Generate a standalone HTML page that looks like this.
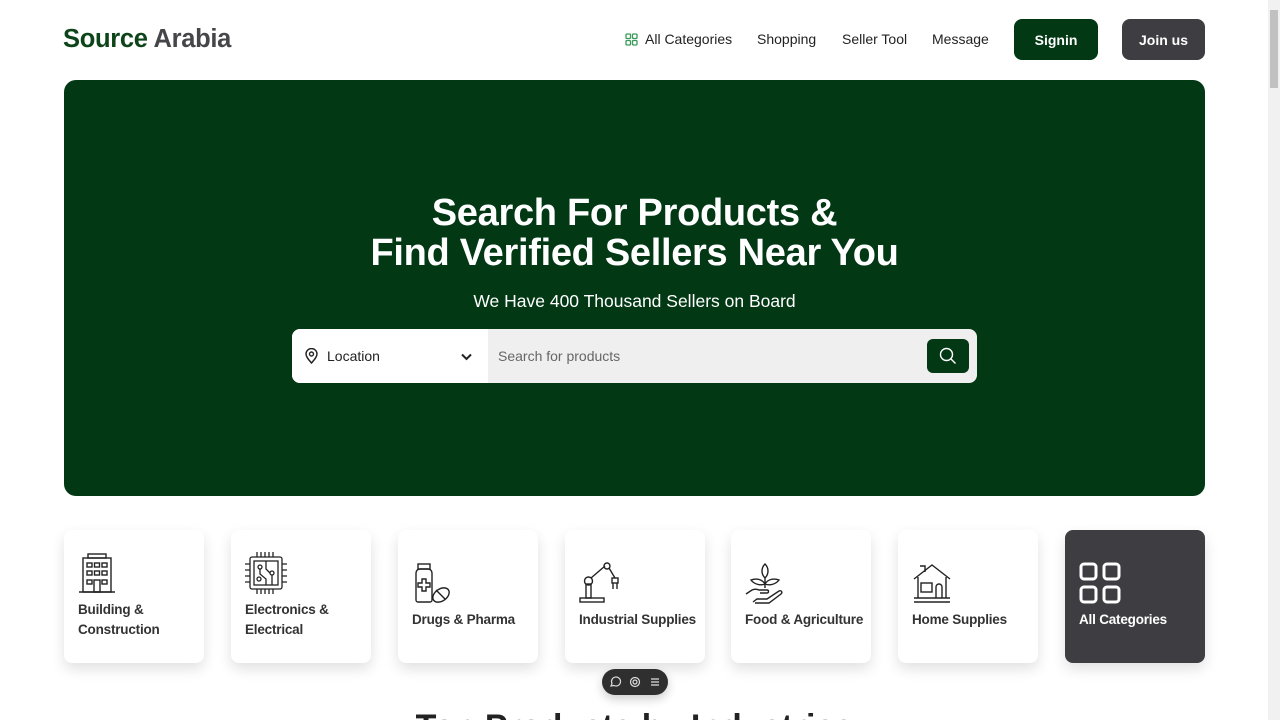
<!DOCTYPE html>
<html style="height:720px;overflow:hidden"><head><meta charset="utf-8"><style>
*{box-sizing:border-box;margin:0;padding:0}
body{width:1280px;height:720px;overflow:hidden;background:#fff;font-family:"Liberation Sans",sans-serif;color:#222;position:relative}
.abs{position:absolute}
.logo{left:63px;top:25px;font-size:25.5px;font-weight:bold;letter-spacing:-0.3px}
.nav{top:31px;font-size:14px;color:#222}
.btn{top:19px;height:41px;border-radius:8px;color:#fff;font-weight:bold;font-size:14px;display:flex;align-items:center;justify-content:center}
.hero{left:64px;top:80px;width:1141px;height:416px;background:#023814;border-radius:12px}
.h1{left:0;width:1269px;text-align:center;color:#fff;font-size:38px;line-height:40px;font-weight:bold;letter-spacing:-0.3px}
.card{top:530px;width:140px;height:133px;background:#fff;border-radius:8px;box-shadow:0 6px 14px rgba(0,0,0,.12)}
.card .t{position:absolute;left:14px;font-size:13.5px;font-weight:bold;color:#333;line-height:20px;white-space:nowrap;letter-spacing:-0.2px}
.card svg{position:absolute;left:14px}
</style></head><body>
<div class="abs logo"><span style="color:#0d4419">Source</span> <span style="color:#46464a">Arabia</span></div>
<svg class="abs" style="left:625px;top:33px" width="13" height="13" viewBox="0 0 13 13" fill="none" stroke="#3a9a5a" stroke-width="1.3"><rect x="1" y="1" width="4.5" height="4.5" rx="1"/><rect x="7.5" y="1" width="4.5" height="4.5" rx="1"/><rect x="1" y="7.5" width="4.5" height="4.5" rx="1"/><rect x="7.5" y="7.5" width="4.5" height="4.5" rx="1"/></svg>
<div class="abs nav" style="left:645px">All Categories</div>
<div class="abs nav" style="left:757px">Shopping</div>
<div class="abs nav" style="left:842px">Seller Tool</div>
<div class="abs nav" style="left:932px">Message</div>
<div class="abs btn" style="left:1014px;width:84px;background:#023814">Signin</div>
<div class="abs btn" style="left:1122px;width:83px;background:#3e3e42">Join us</div>
<div class="abs" style="left:1268px;top:0;width:12px;height:720px;background:#f1f1f1"></div>
<div class="abs" style="left:1270px;top:10px;width:8px;height:78px;background:#c1c1c1"></div>

<div class="abs hero"></div>
<div class="abs h1" style="top:193px">Search For Products &amp;</div>
<div class="abs h1" style="top:233px">Find Verified Sellers Near You</div>
<div class="abs" style="left:0;width:1269px;top:291px;text-align:center;color:#fff;font-size:17.5px">We Have 400 Thousand Sellers on Board</div>
<div class="abs" style="left:292px;top:329px;width:685px;height:54px;background:#efefef;border-radius:8px;overflow:hidden">
 <div class="abs" style="left:0;top:0;width:196px;height:54px;background:#fff"></div>
 <svg class="abs" style="left:13px;top:19px" width="13" height="16" viewBox="0 0 13 16" fill="none" stroke="#222" stroke-width="1.4"><path d="M6.5 15C3 11 1 8.5 1 6a5.5 5.5 0 0 1 11 0c0 2.5-2 5-5.5 9z"/><circle cx="6.5" cy="6" r="2"/></svg>
 <div class="abs" style="left:35px;top:19px;font-size:14px;color:#222">Location</div>
 <svg class="abs" style="left:169px;top:24px" width="11" height="8" viewBox="0 0 11 8" fill="none" stroke="#222" stroke-width="2"><path d="M1 1.5l4.5 4.5 4.5-4.5"/></svg>
 <div class="abs" style="left:206px;top:19px;font-size:14px;color:#666">Search for products</div>
 <div class="abs" style="left:635px;top:10px;width:42px;height:34px;background:#023814;border-radius:6px"></div>
 <svg class="abs" style="left:647px;top:18px" width="18" height="18" viewBox="0 0 18 18" fill="none" stroke="#fff" stroke-width="1.4"><circle cx="7.5" cy="7.5" r="6"/><path d="M12 12l4.5 4.5"/></svg>
</div>

<div class="abs card" style="left:64px">
 <svg style="top:22px" width="38" height="42" viewBox="0 0 38 42" fill="none" stroke="#222" stroke-width="1.4"><rect x="5" y="6" width="28" height="34"/><rect x="10" y="2" width="18" height="4"/><path d="M1 40h36"/><rect x="9" y="11" width="5" height="4"/><rect x="16.5" y="11" width="5" height="4"/><rect x="24" y="11" width="5" height="4"/><rect x="9" y="19" width="5" height="4"/><rect x="16.5" y="19" width="5" height="4"/><rect x="24" y="19" width="5" height="4"/><rect x="9" y="28" width="5" height="4"/><rect x="16" y="28" width="6" height="12"/><rect x="24" y="28" width="5" height="4"/></svg>
 <div class="t" style="top:70px">Building &amp;<br>Construction</div></div>
<div class="abs card" style="left:231px">
 <svg style="top:22px" width="42" height="42" viewBox="0 0 42 42" fill="none" stroke="#222" stroke-width="1.3"><rect x="5" y="5" width="32" height="32" rx="2"/><rect x="9" y="9" width="24" height="24"/><path d="M12 0v5M16 0v5M20 0v5M24 0v5M28 0v5M12 37v5M16 37v5M20 37v5M24 37v5M28 37v5M0 12h5M0 18h5M0 24h5M0 30h5M37 12h5M37 18h5M37 24h5M37 30h5"/><circle cx="15" cy="15" r="2"/><circle cx="27" cy="21" r="2"/><circle cx="14" cy="27" r="2"/><path d="M15 17v5l6 5v6M27 23v10M21 9v8l4 4"/></svg>
 <div class="t" style="top:70px">Electronics &amp;<br>Electrical</div></div>
<div class="abs card" style="left:398px">
 <svg style="top:32px" width="38" height="42" viewBox="0 0 38 42" fill="none" stroke="#222" stroke-width="1.4"><rect x="6" y="2" width="12" height="5"/><path d="M4 11a4 4 0 0 1 4-4h8a4 4 0 0 1 4 4v27a2 2 0 0 1-2 2H6a2 2 0 0 1-2-2z"/><path d="M10 17h4v4h4v4h-4v4h-4v-4H6v-4h4z"/><ellipse cx="29" cy="33" rx="9" ry="6" transform="rotate(-35 29 33)"/><path d="M24 28l9 9"/></svg>
 <div class="t" style="top:80px">Drugs &amp; Pharma</div></div>
<div class="abs card" style="left:565px">
 <svg style="top:32px" width="44" height="42" viewBox="0 0 44 42" fill="none" stroke="#222" stroke-width="1.4"><rect x="1" y="36" width="24" height="4"/><rect x="7" y="22" width="5" height="14"/><circle cx="9.5" cy="19" r="4"/><path d="M12 16L26 4"/><circle cx="28" cy="4" r="3"/><path d="M30 6l6 10"/><rect x="33" y="16" width="6" height="5"/><path d="M34 21v6M38 21v6"/></svg>
 <div class="t" style="top:80px">Industrial Supplies</div></div>
<div class="abs card" style="left:731px">
 <svg style="top:32px" width="40" height="42" viewBox="0 0 40 42" fill="none" stroke="#222" stroke-width="1.4"><path d="M20 2c-4 4-4 10 0 14 4-4 4-10 0-14zM20 16v10M20 22c-3-5-9-6-14-4 3 4 9 6 14 4zM20 22c3-5 9-6 14-4-3 4-9 6-14 4z"/><path d="M1 32l6-4c2-1 5-1 7 0h8c2 0 2 3 0 3h-7M8 40l4-3h10l12-8c2-1 4 1 2 3l-12 9H10"/></svg>
 <div class="t" style="top:80px">Food &amp; Agriculture</div></div>
<div class="abs card" style="left:898px">
 <svg style="top:32px" width="40" height="42" viewBox="0 0 40 42" fill="none" stroke="#222" stroke-width="1.4"><path d="M2 17L20 3l18 14M6 15v21M34 15v21M2 36h36M2 40h36M8 4h5v6"/><rect x="9" y="21" width="11" height="9"/><path d="M24 36V25a3 3 0 0 1 6 0v11"/></svg>
 <div class="t" style="top:80px">Home Supplies</div></div>
<div class="abs card" style="left:1065px;background:#3e3e42">
 <svg style="top:32px" width="42" height="42" viewBox="0 0 42 42" fill="none" stroke="#fff" stroke-width="3"><rect x="2" y="2" width="15" height="15" rx="3"/><rect x="25" y="2" width="15" height="15" rx="3"/><rect x="2" y="25" width="15" height="15" rx="3"/><rect x="25" y="25" width="15" height="15" rx="3"/></svg>
 <div class="t" style="top:80px;color:#fff">All Categories</div></div>

<div class="abs" style="left:602px;top:669px;width:66px;height:26px;background:#2f2f2f;border-radius:13px;box-shadow:0 4px 10px rgba(0,0,0,.2)"></div>
<svg class="abs" style="left:609px;top:676px" width="54" height="12" viewBox="0 0 54 12" fill="none" stroke="#ddd" stroke-width="1.2"><path d="M2 10l1-2.5A4.5 4.5 0 1 1 5 9.5z"/><circle cx="26" cy="6" r="4.5"/><circle cx="26" cy="6" r="2"/><path d="M42 3h8M42 6h8M42 9h8"/></svg>
<div class="abs" style="left:0;width:1269px;top:705px;height:15px;overflow:hidden"><div style="position:absolute;left:0;width:1269px;top:2px;line-height:40px;text-align:center;font-size:34px;font-weight:bold;color:#222">Top Products by Industries</div></div>
</body></html>
